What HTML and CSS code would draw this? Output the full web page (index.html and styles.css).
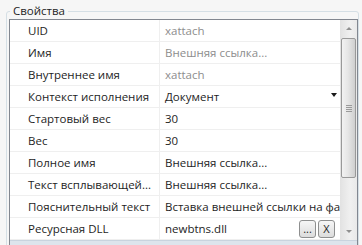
FILE: index.html
```html
<!DOCTYPE html>
<html lang="ru">
<head>
<meta charset="utf-8">
<link rel="stylesheet" href="styles.css">
</head>
<body>
<div class="group">
  <div class="legend">Свойства</div>
  <div class="grid">
    <div class="main">
      <div class="rows">
        <div class="row"><div class="name">UID</div><div class="value ro">xattach</div></div>
        <div class="row"><div class="name">Имя</div><div class="value ro">Внешняя ссылка...</div></div>
        <div class="row"><div class="name">Внутреннее имя</div><div class="value ro">xattach</div></div>
        <div class="row"><div class="name">Контекст исполнения</div><div class="value combo"><span>Документ</span><span class="arrow"></span></div></div>
        <div class="row"><div class="name">Стартовый вес</div><div class="value">30</div></div>
        <div class="row"><div class="name">Вес</div><div class="value">30</div></div>
        <div class="row"><div class="name">Полное имя</div><div class="value">Внешняя ссылка...</div></div>
        <div class="row"><div class="name">Текст всплывающей...</div><div class="value">Внешняя ссылка...</div></div>
        <div class="row"><div class="name">Пояснительный текст</div><div class="value">Вставка внешней ссылки на файл</div></div>
        <div class="row"><div class="name">Ресурсная DLL</div><div class="value combo"><span>newbtns.dll</span><span class="btns"><span class="btn">...</span><span class="btn">X</span></span></div></div>
      </div>
      <div class="scroll">
        <div class="sarrow up"></div>
        <div class="track">
          <div class="thumb"><div class="grip"></div></div>
        </div>
        <div class="sarrow down"></div>
      </div>
    </div>
    <div class="strip"></div>
  </div>
</div>
</body>
</html>
```
FILE: styles.css
```css
html, body {
  margin: 0;
  padding: 0;
}
body {
  background: #f6f6f6;
  font-family: "Open Sans", "Noto Sans", sans-serif;
  font-size: 11.5px;
  color: #1e1e1e;
  width: 362px;
  height: 245px;
  overflow: hidden;
}
.group {
  position: relative;
  margin: 11px 0 0 6px;
  width: 353px;
  border: 1px solid #d5dfe5;
  border-radius: 3px;
  padding: 7px 1px 0 2px;
  height: 240px;
  box-sizing: border-box;
}
.legend {
  position: absolute;
  left: 3px;
  top: -9px;
  padding: 0 3px;
  background: #f6f6f6;
  line-height: 16px;
}
.grid {
  width: 349px;
  border: 1px solid #828790;
  background: #fff;
  box-sizing: border-box;
}
.main {
  display: flex;
  height: 220px;
}
.rows {
  width: 330px;
  overflow: hidden;
}
.row {
  display: grid;
  grid-template-columns: 149px 181px;
  height: 22px;
  border-bottom: 1px solid #efefef;
  box-sizing: border-box;
}
.name {
  padding-left: 18px;
  line-height: 21px;
  white-space: nowrap;
  overflow: hidden;
}
.value {
  border-left: 1px solid #efefef;
  padding-left: 5px;
  line-height: 21px;
  white-space: nowrap;
  overflow: hidden;
}
.ro {
  color: #8d8d8d;
}
.combo {
  display: flex;
  align-items: center;
  justify-content: space-between;
  padding-right: 3px;
}
.arrow {
  width: 0;
  height: 0;
  border-left: 3.5px solid transparent;
  border-right: 3.5px solid transparent;
  border-top: 4px solid #1a1a1a;
  margin-top: -4px;
}
.btns {
  display: flex;
  gap: 2px;
  padding-right: 2px;
}
.btn {
  width: 17px;
  height: 18px;
  box-sizing: border-box;
  border: 1px solid #8e8f8f;
  border-radius: 3px;
  background: linear-gradient(#f6f6f6, #dcdcdc);
  font-size: 11px;
  line-height: 15px;
  text-align: center;
  color: #1e1e1e;
}
.scroll {
  width: 17px;
  display: flex;
  flex-direction: column;
  background: linear-gradient(to right, #e2e2e2, #f0f0f0 60%, #e9e9e9);
}
.sarrow {
  height: 17px;
  display: flex;
  align-items: center;
  justify-content: center;
}
.sarrow::after {
  content: "";
  width: 0;
  height: 0;
  border-left: 3px solid transparent;
  border-right: 3px solid transparent;
}
.up::after {
  border-bottom: 3px solid #909090;
}
.down::after {
  border-top: 3px solid #909090;
}
.track {
  flex: 1;
  padding: 1px 1px 0 1px;
}
.thumb {
  height: 140px;
  border: 1px solid #999;
  border-radius: 2px;
  box-sizing: border-box;
  background: linear-gradient(to right, #f2f2f2, #e6e6e6 45%, #cfcfcf);
  display: flex;
  align-items: center;
  justify-content: center;
}
.grip {
  width: 6px;
  height: 7px;
  background: repeating-linear-gradient(#9a9a9a 0 1px, transparent 1px 2px);
}
.strip {
  height: 4px;
  background: #dde4ec;
  border-top: 1px solid #c9d3de;
}
```
